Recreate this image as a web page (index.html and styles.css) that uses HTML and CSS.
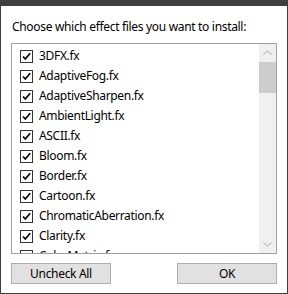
FILE: index.html
```html
<!DOCTYPE html>
<html>
<head>
<meta charset="utf-8">
<link rel="stylesheet" href="styles.css">
</head>
<body>
<div class="window">
  <div class="titlebar"></div>
  <div class="content">
    <div class="prompt">Choose which effect files you want to install:</div>
    <div class="listbox">
      <div class="items">
        <div class="item"><span class="cb"><svg viewBox="0 0 11 11" width="11" height="11"><path d="M2 5.5 L4.3 8 L9.2 2.2" fill="none" stroke="#000" stroke-width="1.7"/></svg></span><span class="label">3DFX.fx</span></div>
        <div class="item"><span class="cb"><svg viewBox="0 0 11 11" width="11" height="11"><path d="M2 5.5 L4.3 8 L9.2 2.2" fill="none" stroke="#000" stroke-width="1.7"/></svg></span><span class="label">AdaptiveFog.fx</span></div>
        <div class="item"><span class="cb"><svg viewBox="0 0 11 11" width="11" height="11"><path d="M2 5.5 L4.3 8 L9.2 2.2" fill="none" stroke="#000" stroke-width="1.7"/></svg></span><span class="label">AdaptiveSharpen.fx</span></div>
        <div class="item"><span class="cb"><svg viewBox="0 0 11 11" width="11" height="11"><path d="M2 5.5 L4.3 8 L9.2 2.2" fill="none" stroke="#000" stroke-width="1.7"/></svg></span><span class="label">AmbientLight.fx</span></div>
        <div class="item"><span class="cb"><svg viewBox="0 0 11 11" width="11" height="11"><path d="M2 5.5 L4.3 8 L9.2 2.2" fill="none" stroke="#000" stroke-width="1.7"/></svg></span><span class="label">ASCII.fx</span></div>
        <div class="item"><span class="cb"><svg viewBox="0 0 11 11" width="11" height="11"><path d="M2 5.5 L4.3 8 L9.2 2.2" fill="none" stroke="#000" stroke-width="1.7"/></svg></span><span class="label">Bloom.fx</span></div>
        <div class="item"><span class="cb"><svg viewBox="0 0 11 11" width="11" height="11"><path d="M2 5.5 L4.3 8 L9.2 2.2" fill="none" stroke="#000" stroke-width="1.7"/></svg></span><span class="label">Border.fx</span></div>
        <div class="item"><span class="cb"><svg viewBox="0 0 11 11" width="11" height="11"><path d="M2 5.5 L4.3 8 L9.2 2.2" fill="none" stroke="#000" stroke-width="1.7"/></svg></span><span class="label">Cartoon.fx</span></div>
        <div class="item"><span class="cb"><svg viewBox="0 0 11 11" width="11" height="11"><path d="M2 5.5 L4.3 8 L9.2 2.2" fill="none" stroke="#000" stroke-width="1.7"/></svg></span><span class="label">ChromaticAberration.fx</span></div>
        <div class="item"><span class="cb"><svg viewBox="0 0 11 11" width="11" height="11"><path d="M2 5.5 L4.3 8 L9.2 2.2" fill="none" stroke="#000" stroke-width="1.7"/></svg></span><span class="label">Clarity.fx</span></div>
        <div class="item"><span class="cb"><svg viewBox="0 0 11 11" width="11" height="11"><path d="M2 5.5 L4.3 8 L9.2 2.2" fill="none" stroke="#000" stroke-width="1.7"/></svg></span><span class="label">ColorMatrix.fx</span></div>
      </div>
      <div class="scrollbar">
        <div class="arrow"><svg viewBox="0 0 9 5" width="9" height="5"><path d="M0.5 4.5 L4.5 0.8 L8.5 4.5" fill="none" stroke="#a6a6a6" stroke-width="1"/></svg></div>
        <div class="track"><div class="thumb"></div></div>
        <div class="arrow"><svg viewBox="0 0 9 5" width="9" height="5"><path d="M0.5 0.5 L4.5 4.2 L8.5 0.5" fill="none" stroke="#a6a6a6" stroke-width="1"/></svg></div>
      </div>
    </div>
    <div class="buttons">
      <button class="btn">Uncheck All</button>
      <button class="btn">OK</button>
    </div>
  </div>
</div>
</body>
</html>
```
FILE: styles.css
```css
html, body {
  margin: 0;
  padding: 0;
  background: #ffffff;
}
.window {
  width: 288px;
  height: 294px;
  box-sizing: border-box;
  border: 1px solid #3f3f3f;
  border-top: none;
  background: #fff;
  display: flex;
  flex-direction: column;
  font-family: "Noto Sans", "Open Sans", sans-serif;
  font-size: 12px;
  letter-spacing: -0.32px;
  color: #000;
}
.titlebar {
  height: 6px;
  background: #3f3f3f;
  flex: none;
}
.content {
  padding: 0 10px 0 10px;
  display: flex;
  flex-direction: column;
}
.prompt {
  height: 37px;
  line-height: 16px;
  padding-top: 13px;
  padding-left: 1px;
  box-sizing: border-box;
  white-space: nowrap;
}
.listbox {
  height: 211px;
  width: 266px;
  box-sizing: border-box;
  border: 1px solid #a0a0a0;
  display: flex;
  overflow: hidden;
}
.items {
  flex: 1;
  padding-top: 4px;
  overflow: hidden;
}
.item {
  height: 20px;
  display: flex;
  align-items: flex-start;
  padding-left: 8px;
}
.cb {
  width: 13px;
  height: 13px;
  box-sizing: border-box;
  border: 1px solid #333;
  background: #fff;
  margin-top: 2px;
  display: flex;
  align-items: center;
  justify-content: center;
  flex: none;
}
.cb svg { display: block; }
.label {
  margin-left: 6px;
  line-height: 16px;
  white-space: nowrap;
}
.scrollbar {
  width: 17px;
  flex: none;
  background: #f0f0f0;
  display: flex;
  flex-direction: column;
}
.arrow {
  height: 17px;
  display: flex;
  align-items: center;
  justify-content: center;
  flex: none;
}
.track {
  flex: 1;
  padding-top: 1px;
}
.thumb {
  height: 31px;
  background: #cdcdcd;
}
.buttons {
  display: flex;
  justify-content: space-between;
  width: 266px;
  margin-top: 9px;
}
.btn {
  width: 100px;
  height: 21px;
  box-sizing: border-box;
  border: 1px solid #adadad;
  background: #e1e1e1;
  font-family: "Noto Sans", "Open Sans", sans-serif;
  font-size: 12px;
  letter-spacing: -0.32px;
  color: #000;
  padding: 0;
  line-height: 18px;
}
```
